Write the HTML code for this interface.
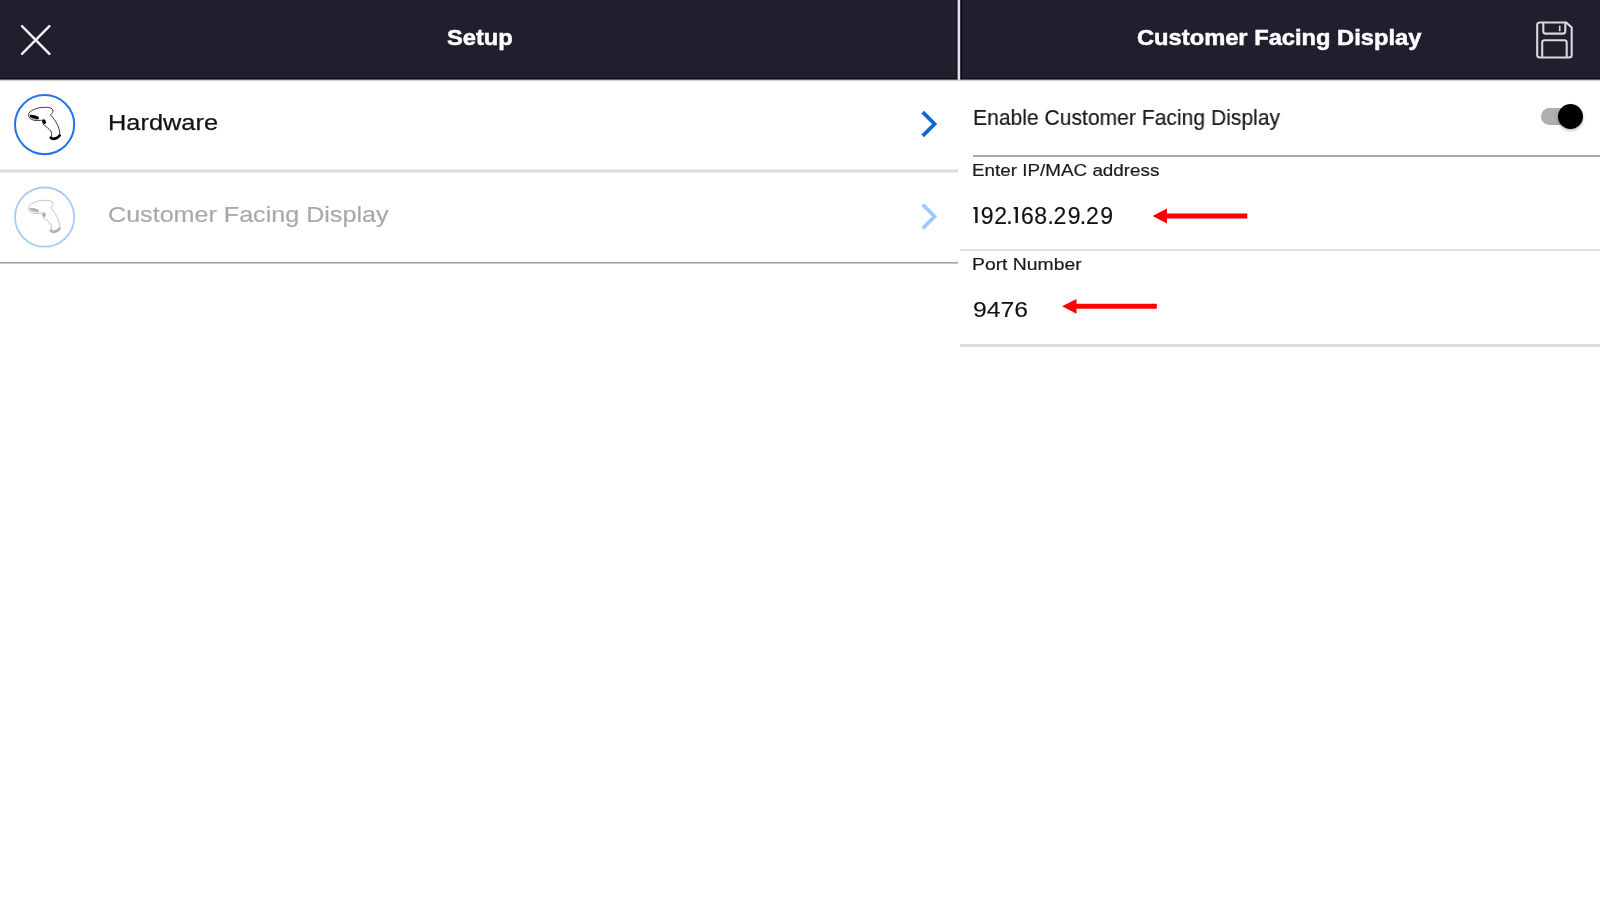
<!DOCTYPE html>
<html>
<head>
<meta charset="utf-8">
<style>
html,body{margin:0;padding:0;width:1600px;height:900px;overflow:hidden;background:#fff;}
body{position:relative;font-family:"Liberation Sans",sans-serif;}
.a{position:absolute;}
.t{position:absolute;white-space:nowrap;line-height:1;will-change:transform;}
.hdr{position:absolute;top:0;height:80px;background:#1f1f2d;}
</style>
</head>
<body>
<div id="root" style="position:absolute;left:0;top:0;width:1600px;height:900px;overflow:hidden;filter:blur(0.35px);">
<!-- headers -->
<div class="hdr" style="left:0;width:958px;height:79px;"></div>
<div class="hdr" style="left:960px;width:640px;height:79px;"></div>
<div class="a" style="left:0;top:79px;width:1600px;height:1px;background:#606068;"></div>
<div class="a" style="left:0;top:80px;width:1600px;height:1px;background:#cdcdd0;"></div>
<div class="a" style="left:0;top:78px;width:957px;height:1px;background:#0c0c1c;"></div>
<div class="a" style="left:961px;top:78px;width:639px;height:1px;background:#0c0c1c;"></div>
<div class="a" style="left:956px;top:0;width:1px;height:79px;background:#101020;"></div>
<div class="a" style="left:957px;top:0;width:1px;height:79px;background:#6a6a70;"></div>
<div class="a" style="left:958px;top:0;width:2px;height:80px;background:#e3e3e3;"></div>
<div class="a" style="left:960px;top:0;width:1px;height:79px;background:#3a3a42;"></div>
<div class="a" style="left:961px;top:0;width:1px;height:79px;background:#05051a;"></div>

<div class="t" style="left:446.7px;top:26.6px;font-size:22px;font-weight:bold;color:#fff;-webkit-text-stroke:0.5px #fff;transform:scaleX(1.076);transform-origin:0 0;">Setup</div>
<div class="t" style="left:1137.3px;top:26.6px;font-size:22px;font-weight:bold;color:#fff;-webkit-text-stroke:0.5px #fff;transform:scaleX(1.077);transform-origin:0 0;">Customer Facing Display</div>

<!-- close X -->
<svg class="a" style="left:0;top:0" width="80" height="80" viewBox="0 0 80 80">
  <path d="M22 26.2 L49.4 53.8 M49.4 26.2 L22 53.8" stroke="#f4f4f4" stroke-width="2.4" stroke-linecap="round" fill="none"/>
</svg>

<!-- save icon -->
<svg class="a" style="left:1520px;top:0" width="80" height="80" viewBox="0 0 80 80">
  <g fill="none" stroke="#d9d9d9" stroke-width="2.1" stroke-linejoin="round">
    <path d="M19.5 22.5 H46.3 L51.7 27.6 V55 Q51.7 57.5 49.2 57.5 H19.7 Q17.2 57.5 17.2 55 V25 Q17.2 22.5 19.7 22.5 Z"/>
    <path d="M23.3 22.5 V31.3 Q23.3 33.6 25.6 33.6 H43 Q45.3 33.6 45.3 31.3 V22.5"/>
    <path d="M22.2 57.5 V42.6 Q22.2 40.3 24.5 40.3 H44.4 Q46.7 40.3 46.7 42.6 V57.5"/>
    <path d="M39.7 25.6 V31.2" stroke-width="1.6"/>
  </g>
</svg>

<!-- left list rows -->
<div class="a" style="left:0;top:169px;width:958px;height:4px;background:linear-gradient(#efefef 0 25%,#dcdcdc 25% 75%,#f0f0f0 75% 100%);"></div>
<div class="a" style="left:0;top:262px;width:958px;height:1px;background:#a3a3a3;"></div>
<div class="a" style="left:0;top:263px;width:958px;height:1px;background:#c8c8c8;"></div>

<div class="t" style="left:107.7px;top:111.6px;font-size:22.5px;color:#111;-webkit-text-stroke:0.25px #111;transform:scaleX(1.128);transform-origin:0 0;">Hardware</div>
<div class="t" style="left:108px;top:204px;font-size:22.5px;color:#a9a9a9;-webkit-text-stroke:0.2px #a9a9a9;transform:scaleX(1.116);transform-origin:0 0;">Customer Facing Display</div>

<!-- scanner icons -->
<svg class="a" style="left:25px;top:100px;overflow:visible" width="40" height="40" viewBox="0 0 900 900">
  <g>
  <path d="M577 330 C605 300 640 270 628 225 C612 185 560 165 480 165 C380 160 250 175 150 240 C90 275 70 320 85 370 C100 420 160 455 250 462 C320 467 370 455 400 450 L410 550 C470 590 540 650 580 700 C610 740 600 800 580 850 C620 890 720 880 780 800 C790 700 760 600 700 500 C650 420 600 370 577 330 Z" fill="none" stroke="#1a1a1a" stroke-width="19" stroke-linejoin="round"/>
  <ellipse cx="215" cy="395" rx="108" ry="38" transform="rotate(16 215 395)" fill="#8a8a8a"/>
  <ellipse cx="208" cy="378" rx="108" ry="36" transform="rotate(15 208 378)" fill="#000"/>
  <ellipse cx="430" cy="488" rx="40" ry="55" transform="rotate(-20 430 488)" fill="#000"/>
  <path d="M580 850 C620 890 720 880 780 800" fill="none" stroke="#000" stroke-width="60" stroke-linecap="round"/>
  </g>
</svg>
<svg class="a" style="left:25px;top:192.5px;overflow:visible;opacity:0.3" width="40" height="40" viewBox="0 0 900 900"><g>
  <path d="M577 330 C605 300 640 270 628 225 C612 185 560 165 480 165 C380 160 250 175 150 240 C90 275 70 320 85 370 C100 420 160 455 250 462 C320 467 370 455 400 450 L410 550 C470 590 540 650 580 700 C610 740 600 800 580 850 C620 890 720 880 780 800 C790 700 760 600 700 500 C650 420 600 370 577 330 Z" fill="none" stroke="#1a1a1a" stroke-width="19" stroke-linejoin="round"/>
  <ellipse cx="215" cy="395" rx="108" ry="38" transform="rotate(16 215 395)" fill="#8a8a8a"/>
  <ellipse cx="208" cy="378" rx="108" ry="36" transform="rotate(15 208 378)" fill="#000"/>
  <ellipse cx="430" cy="488" rx="40" ry="55" transform="rotate(-20 430 488)" fill="#000"/>
  <path d="M580 850 C620 890 720 880 780 800" fill="none" stroke="#000" stroke-width="60" stroke-linecap="round"/>
  </g></svg>
<!-- circles -->
<svg class="a" style="left:0;top:80px" width="90" height="190" viewBox="0 80 90 190">
  <circle cx="44.6" cy="124.6" r="29.6" fill="none" stroke="#2475e3" stroke-width="2.0"/>
  <circle cx="44.6" cy="217.1" r="29.6" fill="none" stroke="#a6ccf6" stroke-width="1.8"/>
</svg>
<!-- chevrons -->
<svg class="a" style="left:900px;top:90px" width="50" height="160" viewBox="900 90 50 160">
  <path d="M922.7 112.1 L934.6 124 L922.7 135.9" fill="none" stroke="#0c64d7" stroke-width="3.7" stroke-linejoin="miter"/>
  <path d="M922.7 204.6 L934.6 216.5 L922.7 228.4" fill="none" stroke="#9ccaff" stroke-width="3.7" stroke-linejoin="miter"/>
</svg>
<!-- right panel -->
<div class="t" style="left:972.5px;top:106.1px;font-size:22.8px;color:#1a1a1a;-webkit-text-stroke:0.2px #1a1a1a;transform:scaleX(0.925);transform-origin:0 0;">Enable Customer Facing Display</div>
<div class="a" style="left:973px;top:155px;width:627px;height:2px;background:#ababab;"></div>
<div class="t" style="left:972.2px;top:162px;font-size:17.2px;color:#1a1a1a;-webkit-text-stroke:0.2px #1a1a1a;transform:scaleX(1.096);transform-origin:0 0;">Enter IP/MAC address</div>
<!-- IP value -->
<div class="t" style="left:0;top:204.6px;font-size:23px;color:#111;-webkit-text-stroke:0.15px #111;">
<span class="a" style="left:980.8px">9</span>
<span class="a" style="left:994.2px">2</span>
<span class="a" style="left:1006.3px">.</span>
<span class="a" style="left:1020.9px">6</span>
<span class="a" style="left:1034.3px">8</span>
<span class="a" style="left:1047.4px">.</span>
<span class="a" style="left:1053.4px">2</span>
<span class="a" style="left:1067.8px">9</span>
<span class="a" style="left:1079.8px">.</span>
<span class="a" style="left:1086.1px">2</span>
<span class="a" style="left:1100.2px">9</span>
</div>
<svg class="a" style="left:960px;top:200px" width="70" height="30" viewBox="960 200 70 30"><g fill="#111"><path d="M973.4 206.9 H977.6 V223.1 H975.2 V209.3 L973.4 208.7 Z"/><path d="M1013.7 206.9 H1017.9 V223.1 H1015.5 V209.3 L1013.7 208.7 Z"/></g></svg>
<div class="a" style="left:960px;top:249px;width:640px;height:2px;background:#e0e0e0;"></div>
<div class="t" style="left:971.9px;top:257.2px;font-size:16.9px;color:#1a1a1a;-webkit-text-stroke:0.2px #1a1a1a;transform:scaleX(1.145);transform-origin:0 0;">Port Number</div>
<div class="t" style="left:972.6px;top:298.8px;font-size:22.5px;color:#111;-webkit-text-stroke:0.1px #111;transform:scaleX(1.1);transform-origin:0 0;">9476</div>
<div class="a" style="left:960px;top:344px;width:640px;height:3px;background:#dddddd;"></div>

<!-- toggle -->
<div class="a" style="left:1541px;top:108.4px;width:40px;height:17px;border-radius:8.5px;background:#afafaf;"></div>
<div class="a" style="left:1558px;top:104.2px;width:25px;height:25px;border-radius:50%;background:#000;box-shadow:0 1.5px 3px rgba(0,0,0,0.3);"></div>

<!-- red arrows -->
<svg class="a" style="left:0;top:0;pointer-events:none" width="1600" height="900">
  <path d="M1152.6 216 L1167 208.6 L1167 213.4 L1247.3 213.4 L1247.3 218.4 L1167 218.4 L1167 223.4 Z" fill="#ff0000"/>
  <path d="M1062.1 306.3 L1076.5 298.9 L1076.5 303.7 L1156.8 303.7 L1156.8 308.7 L1076.5 308.7 L1076.5 313.7 Z" fill="#ff0000"/>
</svg>
</div>
</body>
</html>
